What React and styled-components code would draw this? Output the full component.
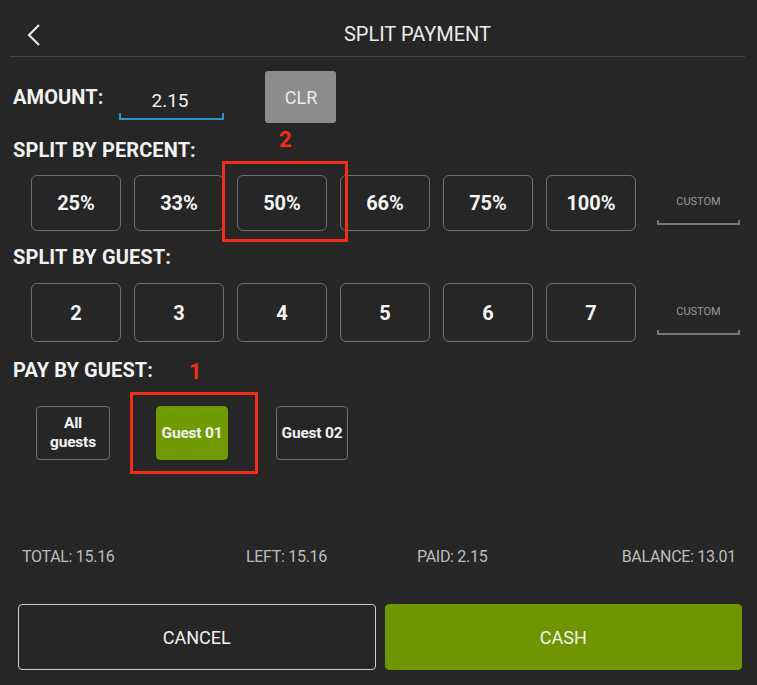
import React from "react";
import styled, { createGlobalStyle } from "styled-components";

const Global = createGlobalStyle`
  html, body { margin: 0; padding: 0; background: #262626; }
  body { font-family: "Roboto", "Liberation Sans", sans-serif; color: #fff; }
`;

const percents = ["25%", "33%", "50%", "66%", "75%", "100%"];
const guests = ["2", "3", "4", "5", "6", "7"];

export default function App() {
  return (
    <Screen>
      <Global />
      <Header>
        <Back>
          <svg width="16" height="24" viewBox="0 0 16 24">
            <path d="M13 2 L3 12 L13 22" fill="none" stroke="#e6e6e6" strokeWidth="2.2" />
          </svg>
        </Back>
        <Title>SPLIT PAYMENT</Title>
      </Header>

      <AmountRow>
        <Label>AMOUNT:</Label>
        <AmountInput>2.15</AmountInput>
        <ClearButton>CLR</ClearButton>
      </AmountRow>

      <Section $top={16}>
        <Label>SPLIT BY PERCENT:</Label>
        <Marker style={{ left: 279, top: 6 }}>2</Marker>
        <ButtonRow $top={14}>
          {percents.map((p) => (
            <SplitButton key={p}>{p}</SplitButton>
          ))}
          <Custom>CUSTOM</Custom>
        </ButtonRow>
        <Highlight style={{ left: 222, top: 38, width: 126, height: 81 }} />
      </Section>

      <Section $top={15}>
        <Label>SPLIT BY GUEST:</Label>
        <ButtonRow $top={15}>
          {guests.map((g) => (
            <SplitButton key={g} $tall>{g}</SplitButton>
          ))}
          <Custom>CUSTOM</Custom>
        </ButtonRow>
      </Section>

      <Section $top={17}>
        <Label>PAY BY GUEST:</Label>
        <Marker style={{ left: 189, top: 19 }}>1</Marker>
        <GuestRow>
          <GuestButton $width={74}>All<br />guests</GuestButton>
          <GuestButton $width={72} $active>Guest 01</GuestButton>
          <GuestButton $width={72}>Guest 02</GuestButton>
        </GuestRow>
        <Highlight style={{ left: 130, top: 50, width: 128, height: 82 }} />
      </Section>

      <Totals>
        <span>TOTAL: 15.16</span>
        <span>LEFT: 15.16</span>
        <span>PAID: 2.15</span>
        <span>BALANCE: 13.01</span>
      </Totals>

      <Actions>
        <ActionButton>CANCEL</ActionButton>
        <ActionButton $primary>CASH</ActionButton>
      </Actions>
    </Screen>
  );
}

const Screen = styled.div`
  width: 757px;
  height: 685px;
  background: #262626;
  display: flex;
  flex-direction: column;
  overflow: hidden;
`;

const Header = styled.div`
  position: relative;
  height: 57px;
  margin: 0 12px 0 10px;
  border-bottom: 1px solid #474747;
  display: flex;
  align-items: center;
  justify-content: center;
  padding-top: 12px;
  box-sizing: border-box;
`;

const Back = styled.div`
  position: absolute;
  left: 16px;
  top: 23px;
`;

const Title = styled.div`
  font-size: 20px;
  color: #ececec;
  transform: translateX(40px);
`;

const AmountRow = styled.div`
  display: flex;
  align-items: center;
  padding: 14px 0 0 13px;
  height: 52px;
`;

const Label = styled.div`
  font-size: 20px;
  line-height: 22px;
  font-weight: 700;
  letter-spacing: 0.1px;
  color: #f2f2f2;
`;

const AmountInput = styled.div`
  width: 105px;
  margin-left: 16px;
  box-sizing: border-box;
  padding: 14px 0 6px 32px;
  font-size: 19px;
  color: #f0f0f0;
  border-bottom: 2px solid #2a95c8;
  position: relative;
  &::before, &::after {
    content: "";
    position: absolute;
    bottom: 0;
    width: 2px;
    height: 5px;
    background: #2a95c8;
  }
  &::before { left: 0; }
  &::after { right: 0; }
`;

const ClearButton = styled.div`
  width: 71px;
  height: 52px;
  margin-left: 41px;
  background: #8c8c8c;
  border-radius: 3px;
  display: flex;
  align-items: center;
  justify-content: center;
  font-size: 18px;
  color: #eaeaea;
`;

const Section = styled.div`
  position: relative;
  padding: ${(p) => p.$top}px 0 0 13px;
`;

const ButtonRow = styled.div`
  display: flex;
  align-items: center;
  gap: 13px;
  padding: ${(p) => p.$top}px 0 0 18px;
`;

const SplitButton = styled.div`
  width: 90px;
  height: ${(p) => (p.$tall ? 59 : 56)}px;
  box-sizing: border-box;
  border: 1px solid #6f6f6f;
  border-radius: 6px;
  display: flex;
  align-items: center;
  justify-content: center;
  font-size: 20px;
  font-weight: 700;
  color: #f4f4f4;
`;

const Custom = styled.div`
  margin-left: 8px;
  width: 83px;
  height: 44px;
  box-sizing: border-box;
  border-bottom: 2px solid #777;
  position: relative;
  display: flex;
  justify-content: center;
  padding-top: 14px;
  font-size: 11px;
  line-height: 13px;
  color: #999;
  &::before, &::after {
    content: "";
    position: absolute;
    bottom: -2px;
    width: 2px;
    height: 5px;
    background: #777;
  }
  &::before { left: 0; }
  &::after { right: 0; }
`;

const GuestRow = styled.div`
  display: flex;
  align-items: center;
  gap: 46px;
  padding: 25px 0 0 23px;
  & > :last-child { margin-left: 2px; }
`;

const GuestButton = styled.div`
  width: ${(p) => p.$width}px;
  height: 54px;
  box-sizing: border-box;
  border: 1px solid ${(p) => (p.$active ? "#6f9a00" : "#707070")};
  background: ${(p) => (p.$active ? "#6f9a00" : "transparent")};
  border-radius: 4px;
  display: flex;
  align-items: center;
  justify-content: center;
  text-align: center;
  font-size: 15.5px;
  font-weight: 700;
  line-height: 19px;
  letter-spacing: -0.2px;
  color: #f2f2f2;
`;

const Marker = styled.div`
  position: absolute;
  color: #f02d17;
  font-size: 22px;
  line-height: 22px;
  font-weight: 700;
`;

const Highlight = styled.div`
  position: absolute;
  box-sizing: border-box;
  border: 3px solid #f02d17;
`;

const Totals = styled.div`
  display: grid;
  grid-template-columns: 224px 171px 1fr auto;
  margin-top: auto;
  padding: 0 21px 0 22px;
  font-size: 16px;
  letter-spacing: -0.3px;
  color: #bdbdbd;
`;

const Actions = styled.div`
  display: flex;
  gap: 9px;
  padding: 38px 15px 15px 18px;
`;

const ActionButton = styled.div`
  flex: 1;
  height: 66px;
  box-sizing: border-box;
  border: 1px solid ${(p) => (p.$primary ? "#6e9600" : "#cfcfcf")};
  background: ${(p) => (p.$primary ? "#6e9600" : "transparent")};
  border-radius: 4px;
  display: flex;
  align-items: center;
  justify-content: center;
  font-size: 18px;
  color: #f2f2f2;
`;
